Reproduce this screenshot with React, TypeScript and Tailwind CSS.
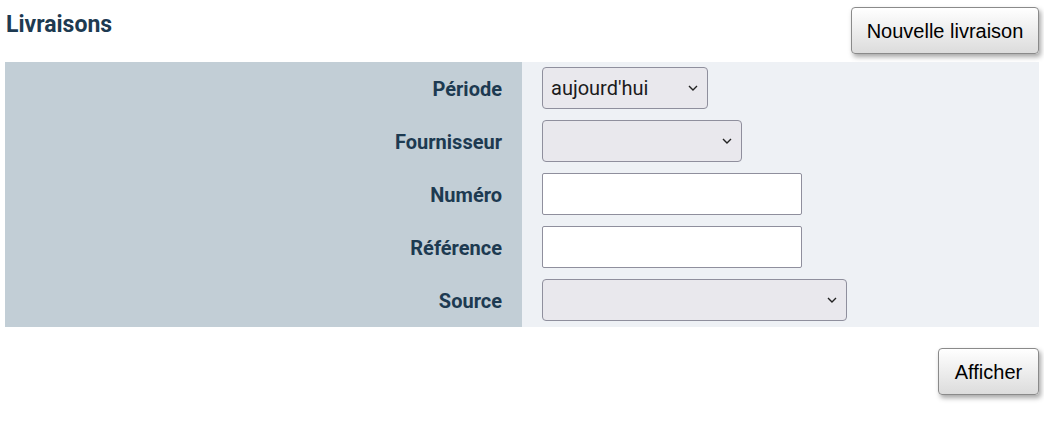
import { useState } from "react";

function Chevron() {
  return (
    <svg width="10" height="6" viewBox="0 0 10 6" className="pointer-events-none absolute right-[10px] top-1/2 -translate-y-1/2">
      <path d="M1 1l4 4 4-4" fill="none" stroke="#222" strokeWidth="1.4" />
    </svg>
  );
}

function Select({ width, value, options }: { width: string; value: string; options: string[] }) {
  const [v, setV] = useState(value);
  return (
    <div className={`relative ${width}`}>
      <select
        value={v}
        onChange={(e) => setV(e.target.value)}
        className="w-full h-[42px] appearance-none rounded-[4px] border border-[#8f8f9d] bg-[#e9e8ed] pl-[8px] pr-[28px] text-[20px] text-[#1b1b1b] outline-none font-['Roboto',sans-serif]"
      >
        {options.map((o) => (
          <option key={o} value={o}>{o}</option>
        ))}
      </select>
      <Chevron />
    </div>
  );
}

function Row({ label, children }: { label: string; children: React.ReactNode }) {
  return (
    <div className="flex h-[53px]">
      <div className="w-[517px] bg-[#c2ced6] flex items-center justify-end pr-[20px] text-[20px] font-bold text-[#1d3a51]">
        {label}
      </div>
      <div className="flex-1 bg-[#eef1f5] flex items-start pt-[5px] pl-[20px]">{children}</div>
    </div>
  );
}

const btn =
  "rounded-[4px] border border-[#8a8a8a] bg-gradient-to-b from-white to-[#dcdcdc] text-[20px] text-black shadow-[2px_3px_5px_rgba(0,0,0,0.35)] font-['Liberation_Sans',Arial,sans-serif]";

export default function App() {
  return (
    <div className="w-[1044px] h-[436px] bg-white font-['Roboto',sans-serif] relative">
      <div className="flex justify-between items-start pl-[6px] pr-[5px] pt-[7px]">
        <h1 className="text-[23px] font-bold text-[#1d3a51] leading-none mt-[6px]">Livraisons</h1>
        <button className={`${btn} h-[47px] w-[188px]`}>Nouvelle livraison</button>
      </div>

      <div className="mt-[8px] mx-[5px] flex flex-col">
        <Row label="Période">
          <Select width="w-[166px]" value="aujourd'hui" options={["aujourd'hui", "hier", "cette semaine", "ce mois"]} />
        </Row>
        <Row label="Fournisseur">
          <Select width="w-[200px]" value="" options={[""]} />
        </Row>
        <Row label="Numéro">
          <input className="w-[260px] h-[42px] bg-white border border-[#8f8f9d] rounded-[2px] outline-none px-2 text-[20px]" />
        </Row>
        <Row label="Référence">
          <input className="w-[260px] h-[42px] bg-white border border-[#8f8f9d] rounded-[2px] outline-none px-2 text-[20px]" />
        </Row>
        <Row label="Source">
          <Select width="w-[305px]" value="" options={[""]} />
        </Row>
      </div>

      <div className="flex justify-end pr-[5px] mt-[21px]">
        <button className={`${btn} h-[47px] w-[101px]`}>Afficher</button>
      </div>
    </div>
  );
}
